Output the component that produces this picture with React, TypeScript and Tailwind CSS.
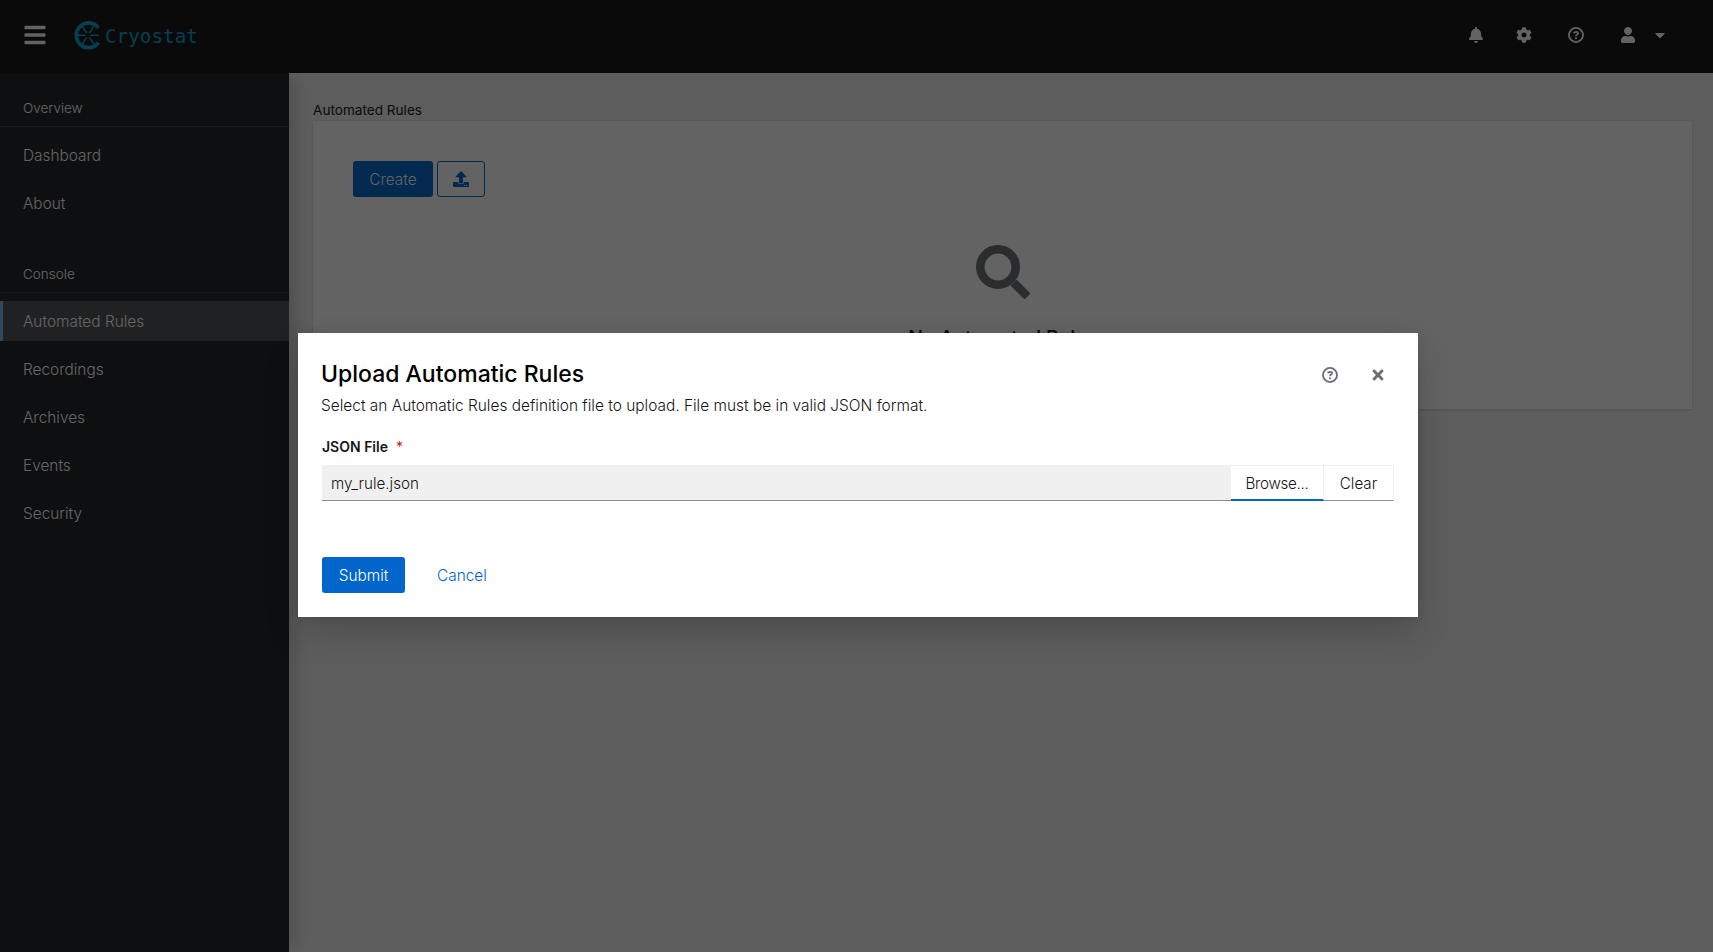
import type { ReactNode } from "react";
import { FaBars, FaBell, FaCaretDown, FaCog, FaTimes, FaUser } from "react-icons/fa";

const consoleItems = ["Automated Rules", "Recordings", "Archives", "Events", "Security"];

function HelpIcon({ className = "" }: { className?: string }) {
  return (
    <svg className={className} width="16" height="16" viewBox="0 0 16 16" fill="none" stroke="currentColor">
      <circle cx="8" cy="8" r="7.05" strokeWidth="1.8" />
      <path d="M5.7 6.2C6.2 5.2 7 4.9 8 4.9C9.3 4.9 10.1 5.5 10.1 6.4C10.1 7.6 8 7.6 8 9.2" strokeWidth="1.7" />
      <circle cx="8" cy="11.2" r="1.05" fill="currentColor" stroke="none" />
    </svg>
  );
}

function UploadIcon() {
  return (
    <svg width="16" height="16" viewBox="0 0 16 16" fill="currentColor">
      <path d="M8 0L13.4 5.6V6.2H10V11.4Q10 12.4 9 12.4H7Q6 12.4 6 11.4V6.2H2.6V5.6Z" />
      <path
        fillRule="evenodd"
        d="M0.8 11H5.2V11.6Q5.2 13.1 6.7 13.1H9.3Q10.8 13.1 10.8 11.6V11H15.2Q16 11 16 11.8V15.2Q16 16 15.2 16H0.8Q0 16 0 15.2V11.8Q0 11 0.8 11ZM11 14V15H12V14ZM13.2 14V15H14.2V14Z"
      />
    </svg>
  );
}

function Logo() {
  return (
    <div className="flex items-center text-[#08a0cc]">
      <svg width="28" height="29" viewBox="0 0 28 29" fill="none" stroke="currentColor">
        <path d="M24.4 7A12.2 12.4 0 1 0 24.4 21.6" strokeWidth="3.8" />
        <path
          d="M2 14.2H11.6M16.2 14.2H25M8.2 5L12.6 12M20 5L15.4 12M8.2 23.4L12.6 16.4M20 23.4L15.4 16.4"
          strokeWidth="1.6"
        />
      </svg>
      <span className="mt-[3px] ml-[3px] font-['DejaVu_Sans_Mono',monospace] text-[19.3px] leading-7 font-extralight">
        Cryostat
      </span>
    </div>
  );
}

function Header() {
  return (
    <header className="flex h-[73px] shrink-0 items-center bg-[#151515] pb-[3px] text-white">
      <FaBars className="ml-[23px] size-6" />
      <div className="ml-[27px]">
        <Logo />
      </div>
      <div className="ml-auto flex items-center pr-[45px]">
        <FaBell className="size-4" />
        <FaCog className="ml-8 size-4" />
        <HelpIcon className="ml-9" />
        <FaUser className="ml-9 size-4" />
        <FaCaretDown className="ml-4 size-4" />
      </div>
    </header>
  );
}

function SectionTitle({ children }: { children: ReactNode }) {
  return (
    <h2 className="border-b border-[#3c3f42] pt-2 pb-[9px] pl-[23px] text-[13.5px] leading-[18px] font-light text-white">
      {children}
    </h2>
  );
}

function NavItem({ label, active = false }: { label: string; active?: boolean }) {
  return (
    <li className={active ? "border-l-[3px] border-[#73bcf7] bg-[#4f5255]" : "border-l-[3px] border-transparent"}>
      <a className="block pt-[9px] pb-[7px] pl-5 text-[15.4px] leading-6 font-light text-white">{label}</a>
    </li>
  );
}

function Sidebar() {
  return (
    <nav className="w-[289px] shrink-0 bg-[#212427] pt-[18px] shadow-[12px_0_16px_-6px_rgba(3,3,3,0.18)]">
      <SectionTitle>Overview</SectionTitle>
      <ul className="mt-2 flex flex-col gap-2">
        <NavItem label="Dashboard" />
        <NavItem label="About" />
      </ul>
      <div className="mt-[34px]">
        <SectionTitle>Console</SectionTitle>
      </div>
      <ul className="mt-2 flex flex-col gap-2">
        {consoleItems.map((item, i) => (
          <NavItem key={item} label={item} active={i === 0} />
        ))}
      </ul>
    </nav>
  );
}

function RulesPage() {
  return (
    <main className="flex-1 px-6 pt-[27px] pr-[21px]">
      <h1 className="text-[13.6px] leading-[21px] font-[370] text-[#151515]">Automated Rules</h1>
      <section className="h-[288px] bg-white p-10 shadow-[0_1px_2px_0_rgba(3,3,3,0.12),0_0_2px_0_rgba(3,3,3,0.06)]">
        <div className="flex gap-1">
          <button className="h-9 w-20 rounded-[3px] bg-[#0066cc] pt-px text-[15.4px] font-light text-white">
            Create
          </button>
          <button className="flex h-9 w-12 items-center justify-center rounded-[3px] border border-[#0066cc] text-[#0066cc]">
            <UploadIcon />
          </button>
        </div>
        <div className="flex flex-col items-center pt-12 text-center">
          <svg width="54" height="54" viewBox="0 0 54 54" fill="none" stroke="#6a6e73">
            <circle cx="22" cy="22" r="17.7" strokeWidth="8.6" />
            <path d="M40.5 40.5L48.5 48.5" strokeWidth="8.5" strokeLinecap="square" strokeLinejoin="round" />
          </svg>
          <h2 className="mt-[26px] text-[19.5px] leading-[26px] font-medium tracking-[-0.1px] text-[#151515]">
            No Automated Rules
          </h2>
        </div>
      </section>
    </main>
  );
}

function UploadDialog() {
  return (
    <div className="h-[284px] w-[1120px] bg-white px-6 pt-[25px] text-[#151515] shadow-[0_16px_32px_0_rgba(3,3,3,0.16),0_0_8px_0_rgba(3,3,3,0.1)]">
      <div className="flex items-start">
        <div>
          <h1 className="-ml-px text-[23px] leading-8 font-[480] text-black">Upload Automatic Rules</h1>
          <p className="-ml-px mt-1 text-[15.44px] leading-6 font-[350]">
            Select an Automatic Rules definition file to upload. File must be in valid JSON format.
          </p>
        </div>
        <div className="mt-[9px] mr-2 ml-auto flex items-center gap-8 text-[#6a6e73]">
          <HelpIcon />
          <FaTimes className="size-4" />
        </div>
      </div>
      <label className="mt-[18px] flex text-[14px] leading-[21px] font-semibold">
        JSON File <span className="ml-2 font-normal text-[#c9190b]">*</span>
      </label>
      <div className="mt-2 flex h-9 text-[15.2px] font-[350]">
        <div className="flex flex-1 items-center border-b border-[#8a8d90] bg-[#f0f0f0] pt-[3px] pl-[9px]">
          my_rule.json
        </div>
        <button className="w-[93px] border-t border-r border-b-2 border-t-[#f0f0f0] border-r-[#f0f0f0] border-b-[#0066cc] pt-[3px] tracking-[-0.3px]">
          Browse...
        </button>
        <button className="w-[70px] border-t border-r border-b border-t-[#f0f0f0] border-r-[#f0f0f0] border-b-[#8a8d90] pt-0.5">
          Clear
        </button>
      </div>
      <div className="mt-14 flex items-center text-[15.4px] font-light">
        <button className="h-9 w-[83px] rounded-[3px] bg-[#0066cc] pt-0.5 text-white">Submit</button>
        <button className="ml-8 pt-0.5 font-[350] text-[#0066cc]">Cancel</button>
      </div>
    </div>
  );
}

export default function App() {
  return (
    <div className="relative flex h-[952px] w-[1713px] flex-col overflow-hidden bg-[#f0f0f0] font-['Inter',sans-serif]">
      <Header />
      <div className="flex flex-1">
        <Sidebar />
        <RulesPage />
      </div>
      <div className="absolute inset-0 bg-[rgba(3,3,3,0.62)] pt-[333px] pl-[298px]">
        <UploadDialog />
      </div>
    </div>
  );
}
